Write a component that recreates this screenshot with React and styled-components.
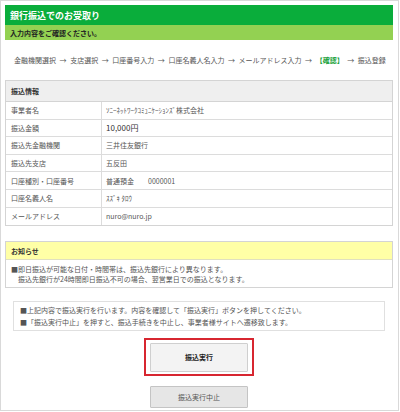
import styled, { createGlobalStyle } from "styled-components";

const GlobalStyle = createGlobalStyle`
  html, body {
    margin: 0;
    padding: 0;
    background: #fff;
  }
  body {
    font-family: "Noto Sans CJK JP", "Noto Sans", sans-serif;
    color: #444;
  }
`;

const rows = [
  ["事業者名", "ｿﾆｰﾈｯﾄﾜｰｸｺﾐｭﾆｹｰｼｮﾝｽﾞ株式会社"],
  ["振込金額", "10,000円", true],
  ["振込先金融機関", "三井住友銀行"],
  ["振込先支店", "五反田"],
  ["口座種別・口座番号", "普通預金　　0000001"],
  ["口座名義人名", "ｽｽﾞｷ ﾀﾛｳ"],
  ["メールアドレス", "nuro@nuro.jp"],
];

const App = () => {
  return (
    <>
      <GlobalStyle />
      <Frame>
        <Title>銀行振込でのお受取り</Title>
        <SubTitle>入力内容をご確認ください。</SubTitle>

        <Steps>
          金融機関選択 → 支店選択 → 口座番号入力 → 口座名義人名入力 →
          メールアドレス入力 → <Current>【確認】</Current> → 振込登録
        </Steps>

        <InfoTable>
          <TableHead>振込情報</TableHead>
          {rows.map(([label, value, strong]) => (
            <Row key={label}>
              <Label>{label}</Label>
              <Value $strong={strong}>{value}</Value>
            </Row>
          ))}
        </InfoTable>

        <Notice>
          <NoticeHead>お知らせ</NoticeHead>
          <NoticeBody>
            <p>■即日振込が可能な日付・時間帯は、振込先銀行により異なります。</p>
            <p>　振込先銀行が24時間即日振込不可の場合、翌営業日での振込となります。</p>
          </NoticeBody>
        </Notice>

        <Notes>
          <p>■上記内容で振込実行を行います。内容を確認して「振込実行」ボタンを押してください。</p>
          <p>■「振込実行中止」を押すと、振込手続きを中止し、事業者様サイトへ遷移致します。</p>
        </Notes>

        <Actions>
          <Highlight>
            <Button $primary>振込実行</Button>
          </Highlight>
          <Button>振込実行中止</Button>
        </Actions>
      </Frame>
    </>
  );
};

const Frame = styled.div`
  box-sizing: border-box;
  width: 399px;
  height: 411px;
  border: 1px solid #d9d9d9;
  padding: 4px 5px 0 4px;
  display: flex;
  flex-direction: column;
`;

const Title = styled.div`
  height: 20px;
  background: #0aad3b;
  color: #fff;
  font-size: 9px;
  font-weight: bold;
  display: flex;
  align-items: center;
  padding-left: 5px;
`;

const SubTitle = styled.div`
  height: 15px;
  background: #93d152;
  color: #222;
  font-size: 7px;
  font-weight: bold;
  display: flex;
  align-items: center;
  padding-left: 5px;
`;

const Steps = styled.div`
  height: 40px;
  display: flex;
  align-items: center;
  padding-left: 9px;
  font-size: 7px;
  color: #555;
  white-space: pre;
  word-spacing: 2px;
`;

const Current = styled.span`
  color: #1aa23c;
  font-weight: bold;
`;

const InfoTable = styled.div`
  border: 1px solid #d4d4d4;
  display: flex;
  flex-direction: column;
`;

const TableHead = styled.div`
  height: 20px;
  background: #efefef;
  border-bottom: 1px solid #d4d4d4;
  font-size: 7px;
  font-weight: bold;
  color: #333;
  display: flex;
  align-items: center;
  padding-left: 5px;
`;

const Row = styled.div`
  display: grid;
  grid-template-columns: 96px 1fr;
  height: 17.6px;
  border-bottom: 1px solid #dcdcdc;
  box-sizing: border-box;

  &:last-child {
    border-bottom: none;
  }
`;

const Label = styled.div`
  border-right: 1px solid #dcdcdc;
  font-size: 7px;
  color: #555;
  display: flex;
  align-items: center;
  padding-left: 5px;
`;

const Value = styled.div`
  font-size: ${(p) => (p.$strong ? "8px" : "7px")};
  color: ${(p) => (p.$strong ? "#333" : "#555")};
  display: flex;
  align-items: center;
  padding-left: 4px;
  white-space: pre;
`;

const Notice = styled.div`
  margin-top: 15px;
  border: 1px solid #d4d4d4;
`;

const NoticeHead = styled.div`
  height: 17px;
  background: #ffffa6;
  border-bottom: 1px solid #e0e0c0;
  font-size: 7px;
  font-weight: bold;
  color: #333;
  display: flex;
  align-items: center;
  padding-left: 5px;
`;

const NoticeBody = styled.div`
  height: 27px;
  display: flex;
  flex-direction: column;
  justify-content: center;
  padding-left: 5px;
  font-size: 7px;
  color: #555;

  p {
    margin: 0;
    line-height: 10px;
  }
`;

const Notes = styled.div`
  margin: 13px 8px 0 8px;
  height: 30px;
  box-sizing: border-box;
  border: 1px solid #e0e0e0;
  display: flex;
  flex-direction: column;
  justify-content: center;
  padding-left: 6px;
  font-size: 7px;
  color: #555;

  p {
    margin: 0;
    line-height: 12px;
  }
`;

const Actions = styled.div`
  margin-top: 7px;
  display: flex;
  flex-direction: column;
  align-items: center;
  gap: 10px;
`;

const Highlight = styled.div`
  box-sizing: border-box;
  width: 110px;
  height: 38px;
  border: 2px solid #d72630;
  display: flex;
  align-items: center;
  justify-content: center;
`;

const Button = styled.button`
  box-sizing: border-box;
  width: 98px;
  height: ${(p) => (p.$primary ? "29px" : "22px")};
  background: ${(p) => (p.$primary ? "#f3f3f3" : "#e6e6e6")};
  border: 1px solid ${(p) => (p.$primary ? "#cfcfcf" : "#c4c4c4")};
  border-radius: 1px;
  font-family: inherit;
  font-size: 7px;
  font-weight: ${(p) => (p.$primary ? "bold" : "normal")};
  color: ${(p) => (p.$primary ? "#222" : "#555")};
  padding: 0;
  cursor: pointer;
`;

export default App;
